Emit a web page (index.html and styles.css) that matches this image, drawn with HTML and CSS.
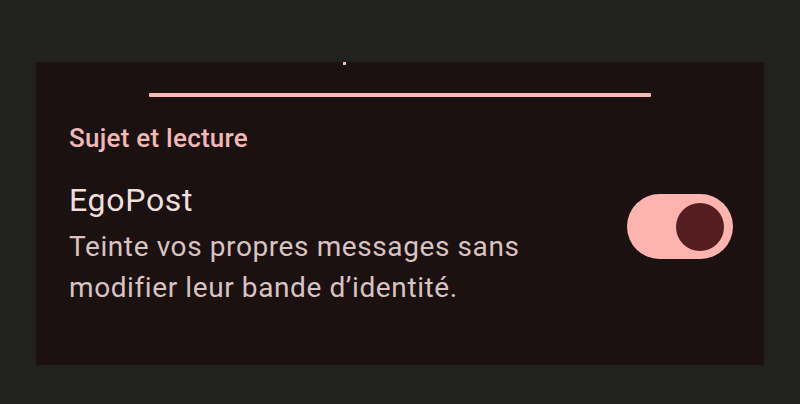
FILE: index.html
```html
<!DOCTYPE html>
<html lang="fr">
<head>
<meta charset="utf-8">
<link rel="stylesheet" href="styles.css">
</head>
<body>
<div class="panel">
  <div class="dot"></div>
  <div class="indicator"></div>
  <div class="section-label">Sujet et lecture</div>
  <div class="row">
    <div class="texts">
      <div class="title">EgoPost</div>
      <div class="desc">Teinte vos propres messages sans<br>modifier leur bande d’identité.</div>
    </div>
    <div class="switch"><div class="thumb"></div></div>
  </div>
</div>
</body>
</html>
```
FILE: styles.css
```css
html, body {
  margin: 0;
  padding: 0;
  background: #212220;
  width: 800px;
  height: 404px;
  overflow: hidden;
  font-family: Roboto, "Noto Sans", sans-serif;
}
.panel {
  margin: 62px 0 0 36px;
  width: 728px;
  height: 303px;
  background: #1c1111;
  box-sizing: border-box;
  display: flex;
  flex-direction: column;
}
.dot {
  width: 3px;
  height: 3px;
  background: #f6b9b6;
  margin-left: 307px;
}
.indicator {
  width: 502px;
  height: 4px;
  background: #f8b7b4;
  margin: 28px 0 0 113px;
  border-radius: 1px;
}
.section-label {
  margin: 25px 0 0 33px;
  color: #f2b8b4;
  font-size: 26px;
  font-weight: 500;
  letter-spacing: 0.25px;
  line-height: 32px;
}
.row {
  display: flex;
  align-items: flex-start;
  justify-content: space-between;
  margin: 26px 31px 0 33px;
}
.title {
  color: #f1dfdc;
  font-size: 32px;
  line-height: 40px;
  letter-spacing: 0.7px;
}
.desc {
  margin-top: 6px;
  color: #d9c3c0;
  font-size: 28px;
  line-height: 41px;
  letter-spacing: 0.6px;
}
.switch {
  width: 106px;
  height: 65px;
  border-radius: 33px;
  background: #ffb3ae;
  display: flex;
  align-items: center;
  justify-content: flex-end;
  padding-right: 9px;
  box-sizing: border-box;
  margin-top: 14px;
}
.thumb {
  width: 48px;
  height: 48px;
  border-radius: 50%;
  background: #561d20;
}
```
